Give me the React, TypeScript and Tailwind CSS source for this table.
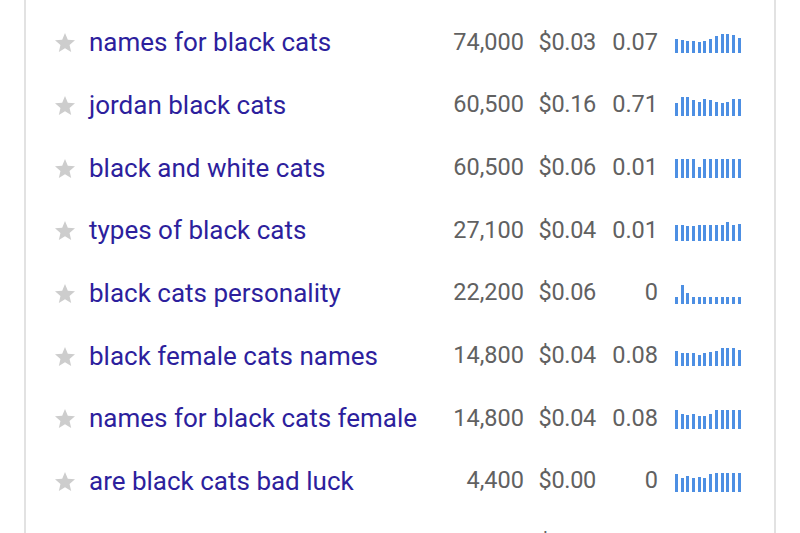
import { Fragment } from "react";

type Row = {
  keyword: string;
  volume: string;
  cpc: string;
  comp: string;
  trend: number[];
};

const rows: Row[] = [
  { keyword: "names for black cats", volume: "74,000", cpc: "$0.03", comp: "0.07", trend: [0.75, 0.7, 0.65, 0.6, 0.55, 0.65, 0.75, 0.9, 1, 1, 0.95, 0.8] },
  { keyword: "jordan black cats", volume: "60,500", cpc: "$0.16", comp: "0.71", trend: [0.65, 0.95, 1, 0.8, 0.7, 0.85, 0.8, 0.7, 0.65, 0.7, 0.85, 0.85] },
  { keyword: "black and white cats", volume: "60,500", cpc: "$0.06", comp: "0.01", trend: [1, 1, 1, 1, 0.6, 1, 1, 1, 1, 1, 1, 1] },
  { keyword: "types of black cats", volume: "27,100", cpc: "$0.04", comp: "0.01", trend: [0.85, 0.85, 0.8, 0.8, 0.85, 0.85, 0.85, 0.85, 0.85, 1, 0.85, 0.9] },
  { keyword: "black cats personality", volume: "22,200", cpc: "$0.06", comp: "0", trend: [0.35, 1, 0.55, 0.35, 0.35, 0.35, 0.35, 0.35, 0.35, 0.35, 0.35, 0.35] },
  { keyword: "black female cats names", volume: "14,800", cpc: "$0.04", comp: "0.08", trend: [0.8, 0.7, 0.7, 0.7, 0.6, 0.7, 0.75, 0.8, 0.95, 0.95, 0.95, 0.85] },
  { keyword: "names for black cats female", volume: "14,800", cpc: "$0.04", comp: "0.08", trend: [1, 0.8, 0.75, 0.8, 0.7, 0.7, 0.8, 1, 1, 1, 1, 1] },
  { keyword: "are black cats bad luck", volume: "4,400", cpc: "$0.00", comp: "0", trend: [0.95, 0.7, 0.8, 0.7, 0.75, 0.7, 0.95, 1, 1, 1, 1, 1] },
  { keyword: "black cats for sale", volume: "2,900", cpc: "$0.41", comp: "0.93", trend: [0.8, 0.8, 0.8, 0.8, 0.8, 0.8, 0.8, 0.8, 0.8, 0.8, 0.8, 0.8] },
];

function Star() {
  return (
    <svg viewBox="0 0 24 24" className="size-6 shrink-0 translate-y-[1px] fill-[#cdcdcd]">
      <path d="M12 17.27L18.18 21l-1.64-7.03L22 9.24l-7.19-.61L12 2 9.19 8.63 2 9.24l5.46 4.73L5.82 21z" />
    </svg>
  );
}

function Trend({ values }: { values: number[] }) {
  return (
    <div className="flex h-[19px] w-[66px] items-end gap-[2.7px]">
      {values.map((v, i) => (
        // bar heights come from data
        <div key={i} className="w-[3px] bg-[#4d8fe3]" style={{ height: `${v * 19}px` }} />
      ))}
    </div>
  );
}

export default function App() {
  return (
    <div
      className="h-[533px] w-full overflow-hidden bg-white"
      style={{ fontFamily: "Roboto, 'Liberation Sans', sans-serif" }}
    >
      <div className="ml-[24px] w-[752px] border-x-2 border-[#e2e2e2] pt-[11px]">
        {rows.map((r) => (
          <Fragment key={r.keyword}>
            <div className="flex h-[62.7px] items-center pl-[27px] pr-[33px] text-[23.5px] leading-none">
              <Star />
              <span className="ml-[12px] flex-1 text-[26px] text-[#2d1f9d]">{r.keyword}</span>
              <span className="w-[100px] text-right text-[#616161]">{r.volume}</span>
              <span className="w-[72px] text-right tracking-[-0.3px] text-[#616161]">{r.cpc}</span>
              <span className="w-[62px] text-right text-[#616161]">{r.comp}</span>
              <div className="ml-[17px] translate-y-[1px]">
                <Trend values={r.trend} />
              </div>
            </div>
          </Fragment>
        ))}
      </div>
    </div>
  );
}
